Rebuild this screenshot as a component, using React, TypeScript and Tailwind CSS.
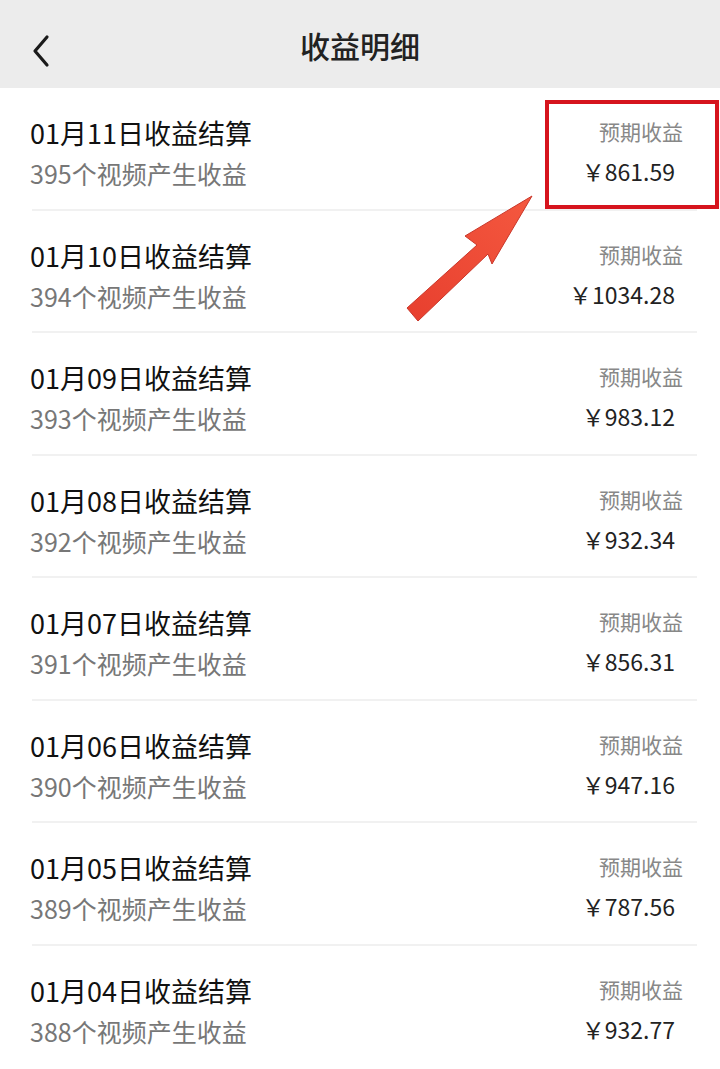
import React from 'react';

const rows = [
  { date: '01月11日', count: 395, amount: '861.59' },
  { date: '01月10日', count: 394, amount: '1034.28' },
  { date: '01月09日', count: 393, amount: '983.12' },
  { date: '01月08日', count: 392, amount: '932.34' },
  { date: '01月07日', count: 391, amount: '856.31' },
  { date: '01月06日', count: 390, amount: '947.16' },
  { date: '01月05日', count: 389, amount: '787.56' },
  { date: '01月04日', count: 388, amount: '932.77' },
];

export default function App() {
  return (
    <div
      className="relative w-[720px] h-[1069px] overflow-hidden bg-white"
      style={{ fontFamily: '"Noto Sans CJK SC", "Noto Sans", sans-serif' }}
    >
      {/* Header */}
      <div className="relative h-[88px] bg-[#ececec] flex items-center justify-center">
        <button className="absolute left-[26px] top-[30px] p-1">
          <svg width="22" height="34" viewBox="0 0 22 34" fill="none">
            <path d="M17 3 L5 17 L17 31" stroke="#1a1a1a" strokeWidth="3.2" strokeLinecap="round" strokeLinejoin="round" />
          </svg>
        </button>
        <h1 className="text-[30px] font-medium text-[#222] leading-none mt-[2px]">收益明细</h1>
      </div>

      {/* List */}
      <div>
        {rows.map((r, i) => (
          <div key={i} className="h-[122.5px] pl-[30px] pr-[37px] flex flex-col">
            <div className="flex flex-1 justify-between">
              <div className="pt-[27px]">
                <div className="text-[27px] leading-[35px] text-[#111]">{r.date}收益结算</div>
                <div className="text-[25px] leading-[34px] mt-[6px] text-[#777]">{r.count}个视频产生收益</div>
              </div>
              <div className="pt-[28px] flex flex-col items-end">
                <div className="text-[21px] leading-[30px] text-[#888]">预期收益</div>
                <div className="text-[23px] leading-[32px] mt-[9px] text-[#222] pr-[8px]">
                  ￥{r.amount}
                </div>
              </div>
            </div>
            {i < rows.length - 1 && <div className="h-[2px] bg-[#f1f1f1] ml-[2px] mr-[-14px]" />}
          </div>
        ))}
      </div>

      {/* Highlight box */}
      <div className="absolute left-[545px] top-[100px] w-[174px] h-[109px] border-[4px] border-[#d6141d]" />

      {/* Arrow */}
      <svg className="absolute left-0 top-0 pointer-events-none" width="720" height="1069">
        <defs>
          <linearGradient id="ag" x1="410" y1="315" x2="530" y2="197" gradientUnits="userSpaceOnUse">
            <stop offset="0" stopColor="#e8402f" />
            <stop offset="1" stopColor="#f4583f" />
          </linearGradient>
        </defs>
        <polygon
          points="532,196 465,236 477,245 407,308 418,321 488,254 492,264"
          fill="url(#ag)"
          stroke="#c9372a"
          strokeWidth="1"
          strokeLinejoin="round"
        />
      </svg>
    </div>
  );
}
